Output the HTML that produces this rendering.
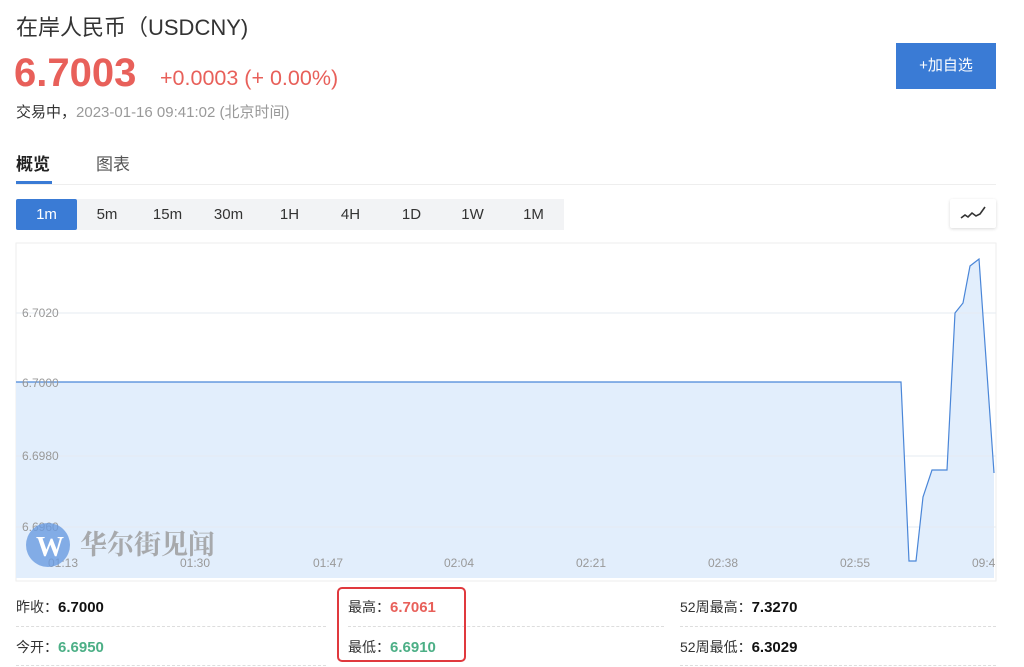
<!DOCTYPE html>
<html><head><meta charset="utf-8"><style>
*{margin:0;padding:0;box-sizing:border-box}
body{width:1024px;height:667px;background:#fff;font-family:"Liberation Sans","Noto Sans CJK SC",sans-serif;position:relative;overflow:hidden;color:#333}
.a{position:absolute;white-space:nowrap}
.tab{position:absolute;top:199px;height:31px;line-height:31px;text-align:center;font-size:15px;color:#333}
.lab{font-size:14px;color:#333}
.v{font-weight:bold;font-size:15px}
.dash{position:absolute;height:0;border-top:1px dashed #ddd}
</style></head><body>
<div class="a" style="left:16px;top:10px;font-size:22px;color:#333">在岸人民币（USDCNY)</div>
<div class="a" style="left:14px;top:51px;font-size:40px;font-weight:bold;color:#e8605a">6.7003</div>
<div class="a" style="left:160px;top:66px;font-size:21.5px;color:#e8605a">+0.0003 (+ 0.00%)</div>
<div class="a" style="left:16px;top:101px;font-size:15px;color:#333">交易中，<span style="color:#999">2023-01-16 09:41:02 (北京时间)</span></div>
<div class="a" style="left:896px;top:43px;width:100px;height:46px;background:#3a7bd5;color:#fff;font-size:15px;line-height:46px;text-align:center">+加自选</div>
<div class="a" style="left:16px;top:150px;font-size:17px;font-weight:bold;color:#222">概览</div>
<div class="a" style="left:96px;top:150px;font-size:17px;color:#555">图表</div>
<div class="a" style="left:16px;top:181px;width:36px;height:3px;background:#3a7bd5"></div>
<div class="a" style="left:16px;top:184px;width:980px;height:1px;background:#eee"></div>
<div class="a" style="left:16px;top:199px;width:548px;height:31px;background:#f2f3f5"></div>
<div class="tab" style="left:16px;width:61px;background:#3a7bd5;color:#fff;border-radius:2px">1m</div>
<div class="tab" style="left:77px;width:60px">5m</div>
<div class="tab" style="left:137px;width:61px">15m</div>
<div class="tab" style="left:198px;width:61px">30m</div>
<div class="tab" style="left:259px;width:61px">1H</div>
<div class="tab" style="left:320px;width:61px">4H</div>
<div class="tab" style="left:381px;width:61px">1D</div>
<div class="tab" style="left:442px;width:61px">1W</div>
<div class="tab" style="left:503px;width:61px">1M</div>
<div class="a" style="left:950px;top:199px;width:46px;height:29px;background:#fff;box-shadow:0 1px 3px rgba(0,0,0,.15);border-radius:2px">
<svg width="46" height="29"><path d="M11 19 L15 16 L18 18 L22 14 L26 17 L30 15 L35 8" fill="none" stroke="#333" stroke-width="1.6"/></svg></div>
<svg class="a" style="left:0;top:240px" width="1024" height="345">
<rect x="16" y="3" width="980" height="338" fill="none" stroke="#eee"/>
<path d="M16 142 L901 142 L909 321 L916 321 L923 257 L932 230 L947 230 L955 73 L963 63 L970 26 L979 19 L994 233 L994 338 L16 338Z" fill="#e2eefc"/>
<g stroke="#e6ebf2"><line x1="16" x2="996" y1="73" y2="73"/><line x1="16" x2="996" y1="216" y2="216"/><line x1="16" x2="996" y1="287" y2="287"/></g>
<path d="M16 142 L901 142 L909 321 L916 321 L923 257 L932 230 L947 230 L955 73 L963 63 L970 26 L979 19 L994 233" fill="none" stroke="#4a86d8" stroke-width="1.2"/>
<g font-size="12" fill="#999" font-family="Liberation Sans,sans-serif">
<text x="22" y="77">6.7020</text><text x="22" y="147">6.7000</text><text x="22" y="220">6.6980</text><text x="22" y="291">6.6960</text>
<text x="48" y="327">01:13</text><text x="180" y="327">01:30</text><text x="313" y="327">01:47</text><text x="444" y="327">02:04</text><text x="576" y="327">02:21</text><text x="708" y="327">02:38</text><text x="840" y="327">02:55</text><text x="972" y="327">09:4</text></g>
<circle cx="48" cy="305" r="22" fill="#6a9be0" opacity=".8"/>
<text x="36" y="316" font-size="28" font-weight="bold" fill="#fff" font-family="Liberation Serif,serif">W</text>
<text x="80" y="314" font-size="27" font-weight="bold" fill="#999" opacity=".8" font-family="Noto Serif CJK SC,serif">华尔街见闻</text>
</svg>
<div class="a lab" style="left:16px;top:597px">昨收：<span class="v" style="color:#111">6.7000</span></div>
<div class="a lab" style="left:16px;top:637px">今开：<span class="v" style="color:#4caf86">6.6950</span></div>
<div class="a lab" style="left:348px;top:597px">最高：<span class="v" style="color:#e8605a">6.7061</span></div>
<div class="a lab" style="left:348px;top:637px">最低：<span class="v" style="color:#4caf86">6.6910</span></div>
<div class="a lab" style="left:680px;top:597px">52周最高：<span class="v" style="color:#111">7.3270</span></div>
<div class="a lab" style="left:680px;top:637px">52周最低：<span class="v" style="color:#111">6.3029</span></div>
<div class="dash" style="left:16px;width:310px;top:626px"></div>
<div class="dash" style="left:16px;width:310px;top:665px"></div>
<div class="dash" style="left:348px;width:316px;top:626px"></div>
<div class="dash" style="left:680px;width:316px;top:626px"></div>
<div class="dash" style="left:680px;width:316px;top:665px"></div>
<div class="a" style="left:337px;top:587px;width:129px;height:75px;border:2px solid #e0393e;border-radius:5px"></div>
</body></html>
